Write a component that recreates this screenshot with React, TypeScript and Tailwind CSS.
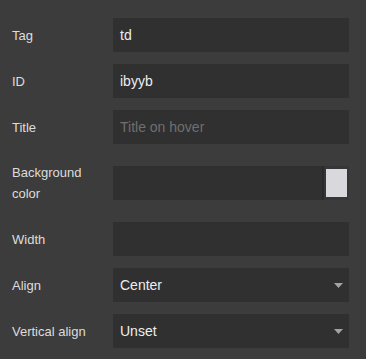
import React from 'react';

type Trait = {
  label: string;
  value?: string;
  placeholder?: string;
  kind: 'text' | 'color' | 'select';
};

const TRAITS: Trait[] = [
  { label: 'Tag', value: 'td', kind: 'text' },
  { label: 'ID', value: 'ibyyb', kind: 'text' },
  { label: 'Title', placeholder: 'Title on hover', kind: 'text' },
  { label: 'Background color', kind: 'color' },
  { label: 'Width', kind: 'text' },
  { label: 'Align', value: 'Center', kind: 'select' },
  { label: 'Vertical align', value: 'Unset', kind: 'select' },
];

const Caret = () => (
  <svg width="9" height="5" viewBox="0 0 9 5" className="shrink-0">
    <polygon points="0,0 9,0 4.5,5" fill="#a3a3a3" />
  </svg>
);

export default function App() {
  return (
    <div
      className="w-[366px] h-[359px] bg-[#3c3c3c] pt-[12px] pl-[12px] pr-[17px] text-[#dddddd]"
      style={{ fontFamily: '"Liberation Sans", Arial, sans-serif' }}
    >
      {TRAITS.map((t) => (
        <div key={t.label} className="flex items-center py-[6px]">
          <div
            className={
              t.kind === 'color'
                ? 'w-[101px] shrink-0 text-[13px] leading-[21px] py-[6px]'
                : 'w-[101px] shrink-0 text-[13px] leading-[21px]'
            }
          >
            {t.kind === 'color' ? (
              <>
                Background
                <br />
                color
              </>
            ) : (
              t.label
            )}
          </div>
          <div className="flex-1 h-[34px] bg-[#303030] flex items-center text-[14px]">
            {t.kind === 'text' && (
              <span className={t.value ? 'pl-[7px] text-[#eeeeee]' : 'pl-[7px] text-[#6f6f6f]'}>
                {t.value ?? t.placeholder ?? ''}
              </span>
            )}
            {t.kind === 'select' && (
              <div className="flex flex-1 items-center justify-between pl-[7px] pr-[6px]">
                <span className="text-[#eeeeee]">{t.value}</span>
                <Caret />
              </div>
            )}
            {t.kind === 'color' && (
              <div className="flex flex-1 h-full justify-end">
                <div className="w-[2px] h-full bg-[#2a2a2a]" />
                <div className="w-[25px] h-full bg-[#363636] flex items-center justify-center">
                  <div className="w-[21px] h-[28px] bg-[#d9d8dd]" />
                </div>
              </div>
            )}
          </div>
        </div>
      ))}
    </div>
  );
}
